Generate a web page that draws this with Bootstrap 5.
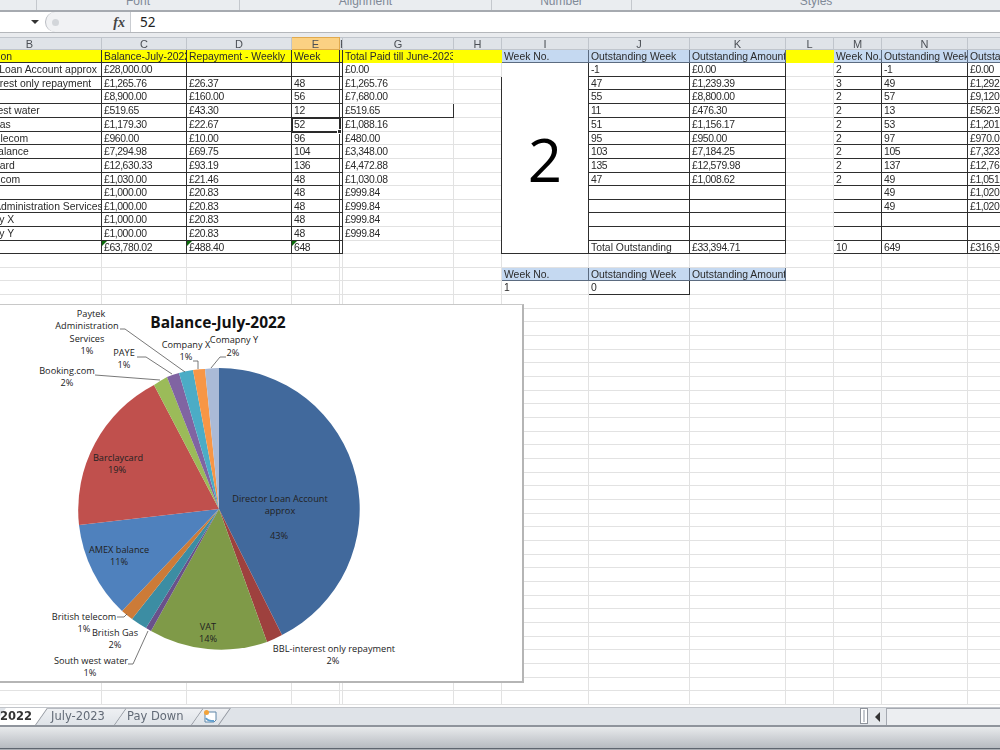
<!DOCTYPE html>
<html lang="en">
<head>
  <meta charset="UTF-8" />
  <title>Balance-July-2022</title>
  <link href="https://cdn.jsdelivr.net/npm/bootstrap@5.3.0/dist/css/bootstrap.min.css" rel="stylesheet">
  <style>
    html, body { height: 750px; overflow: hidden; margin: 0; background: #fff; }
    .xl-app { width: 1000px; height: 750px; font-family: "Liberation Sans", Arial, sans-serif; filter: blur(.3px); }
    .xl-ribbon { height: 12px; background: #eaedf0; border-bottom: 2px solid #a6aab0; overflow: hidden; }
    .xl-group { height: 10px; border-right: 1px solid #c4c8cd; color: #7f8997; font-size: 12px; line-height: 10px; text-align: center; position: relative; }
    .xl-group span { position: relative; top: -4px; }
    .xl-formula { height: 21px; background: #fff; border-bottom: 1px solid #b4b7bb; }
    .xl-name { width: 45px; }
    .xl-arrow { width: 0; height: 0; border-left: 4px solid transparent; border-right: 4px solid transparent; border-top: 4px solid #333; margin-left: 31px; }
    .xl-capsule { width: 86px; background: #f1f2f4; border: 1px solid #c9ccd1; border-left-color: #b9bcc2; border-top: 0; border-bottom: 0; border-radius: 11px 0 0 11px; padding: 0 5px 0 6px; }
    .xl-fx { font-family: "Liberation Serif", serif; font-style: italic; font-weight: bold; font-size: 14px; color: #444; }
    .xl-dot { width: 7px; height: 7px; border-radius: 50%; background: #d3d6da; }
    .xl-value { font-family: "Noto Sans", sans-serif; font-size: 13.5px; padding-left: 9px; color: #222; }
    .xl-gap { height: 4px; background: #e9ebee; }
    .xl-sheet { height: 670px; position: relative; overflow: hidden; }

    .sheet-grid.table { width: 1051px; margin: 0 0 0 -43px; table-layout: fixed; border-collapse: collapse; font-size: 10.4px; color: #2b2b2b; }
    .sheet-grid.table > :not(caption) > * > * { padding: 0 0 0 2px; height: auto; line-height: 11px; border: 1px solid #e2e2e2; box-shadow: none; background: transparent; white-space: nowrap; overflow: hidden; color: inherit; vertical-align: middle; letter-spacing: -.4px; }
    .sheet-grid.table > tbody > tr > td:first-child, .sheet-grid.table > tbody > tr > .ye, .sheet-grid.table > tbody > tr > .bl, .sheet-grid.table > tbody > tr > .txt { letter-spacing: 0; }
    .sheet-grid tr { height: 14px; }
    .sheet-grid tr.r13 { height: 13px; }
    .sheet-grid.table > thead > tr { height: 12px; }
    .sheet-grid.table > thead > tr > th { background: #dfe3e8; border-color: #c0c5cc; color: #4b4f55; font-weight: normal; font-size: 11px; line-height: 10px; letter-spacing: 0; text-align: center; padding: 0; }
    .sheet-grid.table > thead > tr > th.col-on { background: #fbd183; border-color: #e0a94e; }
    .sheet-grid.table > tbody > tr > .dk { border-color: #2e2e2e; }
    .sheet-grid.table > tbody > tr > .ye { background: #ffff00; border-color: #ffff00; }
    .sheet-grid.table > tbody > tr > .ye.dk { border-color: #2e2e2e; }
    .sheet-grid.table > tbody > tr > .bl { background: #c5d9f1; border-color: #5b6b80; }
    .sheet-grid.table > tbody > tr > .big { font-family: "Open Sans", sans-serif; font-size: 60px; font-weight: 500; line-height: 60px; text-align: center; color: #000; padding: 2px 0 0 0; letter-spacing: 0; }
    .sheet-grid.table > tbody > tr > .flagged { position: relative; overflow: visible; }
    .flagged::before { content: ""; position: absolute; left: 0; top: 0; border-top: 5px solid #0b6b0b; border-right: 5px solid transparent; }
    .sheet-grid.table > tbody > tr > .cur { position: relative; overflow: visible; outline: 2px solid #2a2a2a; outline-offset: -1px; }
    .cur::after { content: ""; position: absolute; right: -3px; bottom: -3px; width: 5px; height: 5px; background: #2a2a2a; border: 1px solid #fff; }

    .xl-chart { position: absolute; left: -4px; top: 267px; width: 528px; height: 379px; background: #fff; border: 1px solid #b5b5b5; border-width: 0 2px 2px 0; border-top: 1px solid #c8c8c8; }
    .xl-chart svg { display: block; font-family: "Open Sans", sans-serif; font-size: 9.2px; fill: #222; }
    .xl-chart .ttl { font-size: 15.5px; font-weight: 700; fill: #111; }
    .xl-chart polyline { fill: none; stroke: #555; stroke-width: .8; }

    .xl-tabs { height: 20px; background: #dfe3e8; border-top: 1px solid #c2c5ca; border-bottom: 2px solid #8f949c; overflow: hidden; }
    .xl-tab { position: relative; height: 17px; font-family: "DejaVu Sans", sans-serif; font-size: 11.5px; line-height: 17px; color: #626a76; white-space: nowrap; }
    .xl-tab::before { content: ""; position: absolute; inset: 0; background: linear-gradient(#eef0f3, #dfe3e8); border-right: 1px solid #8f949c; border-top: 1px solid #b6bac1; transform: skewX(-35deg); }
    .xl-tab > * { position: relative; }
    .tab-on { width: 42px; text-align: right; padding-right: 13px; font-weight: bold; color: #333; z-index: 2; }
    .tab-on::before { background: #fff; border-top: 0; }
    .tab-b { width: 79px; padding-left: 9px; }
    .tab-c { width: 77px; padding-left: 6px; }
    .tab-d { width: 27px; padding-left: 5px; }
    .xl-split { width: 8px; height: 16px; background: #fff; border: 1px solid #8f949c; }
    .xl-split::after { content: ""; display: block; width: 2px; height: 12px; margin: 1px 0 0 2px; background: #c5c9cf; }
    .xl-left { width: 18px; height: 17px; background: #e4e7eb; display: flex; align-items: center; justify-content: center; }
    .xl-left i { width: 0; height: 0; border-top: 5px solid transparent; border-bottom: 5px solid transparent; border-right: 5px solid #333; }
    .xl-track { width: 114px; height: 17px; background: #eceef1; border-left: 1px solid #a5a9b1; border-top: 1px solid #a5a9b1; }
    .xl-status { height: 23px; background: linear-gradient(#e8eaec, #b7bbc1 21px, #5f6670 21px, #5f6670 22px, #a9adb3 22px); }
  </style>
</head>
<body>
<div class="xl-app d-flex flex-column">
  <div class="xl-ribbon d-flex">
    <div class="xl-group" style="width:37px"></div>
    <div class="xl-group" style="width:203px"><span>Font</span></div>
    <div class="xl-group" style="width:252px"><span>Alignment</span></div>
    <div class="xl-group" style="width:140px"><span>Number</span></div>
    <div class="xl-group flex-grow-1 border-0"><span>Styles</span></div>
  </div>
  <div class="xl-formula d-flex align-items-stretch">
    <div class="xl-name d-flex align-items-center"><div class="xl-arrow"></div></div>
    <div class="xl-capsule d-flex align-items-center justify-content-between"><div class="xl-dot"></div><div class="xl-fx">fx</div></div>
    <div class="xl-value d-flex align-items-center">52</div>
  </div>
  <div class="xl-gap"></div>

  <div class="xl-sheet">
    <table class="table sheet-grid" id="grid">
      <colgroup>
        <col style="width:144px"><col style="width:85px"><col style="width:105px"><col style="width:48px"><col style="width:3px"><col style="width:111px"><col style="width:48px"><col style="width:87px"><col style="width:101px"><col style="width:96px"><col style="width:48px"><col style="width:48px"><col style="width:86px"><col style="width:41px">
      </colgroup>
      <thead>
        <tr><th>B</th><th>C</th><th>D</th><th class="col-on">E</th><th>F</th><th>G</th><th>H</th><th>I</th><th>J</th><th>K</th><th>L</th><th>M</th><th>N</th><th></th></tr>
      </thead>
      <tbody>
        <tr class="r13"><td class="ye dk">Description</td><td class="ye dk">Balance-July-2022</td><td class="ye dk">Repayment - Weekly</td><td class="ye dk">Week</td><td class="ye dk"></td><td class="ye">Total Paid till June-2023</td><td class="ye"></td><td class="bl">Week No.</td><td class="bl">Outstanding Week</td><td class="bl">Outstanding Amount</td><td class="ye"></td><td class="bl">Week No.</td><td class="bl">Outstanding Week</td><td class="bl">Outstanding Amount</td></tr>
        <tr><td class="dk">Director Loan Account approx</td><td class="dk">£28,000.00</td><td class="dk"></td><td class="dk"></td><td class="dk"></td><td>£0.00</td><td></td><td class="dk big" rowspan="14">2</td><td class="dk">-1</td><td class="dk">£0.00</td><td></td><td class="dk">2</td><td class="dk">-1</td><td class="dk">£0.00</td></tr>
        <tr class="r13"><td class="dk">BBL-interest only repayment</td><td class="dk">£1,265.76</td><td class="dk">£26.37</td><td class="dk">48</td><td class="dk"></td><td>£1,265.76</td><td></td><td class="dk">47</td><td class="dk">£1,239.39</td><td></td><td class="dk">3</td><td class="dk">49</td><td class="dk">£1,292.13</td></tr>
        <tr><td class="dk">VAT</td><td class="dk">£8,900.00</td><td class="dk">£160.00</td><td class="dk">56</td><td class="dk"></td><td>£7,680.00</td><td></td><td class="dk">55</td><td class="dk">£8,800.00</td><td></td><td class="dk">2</td><td class="dk">57</td><td class="dk">£9,120.00</td></tr>
        <tr><td class="dk">South west water</td><td class="dk">£519.65</td><td class="dk">£43.30</td><td class="dk">12</td><td class="dk"></td><td class="dk">£519.65</td><td></td><td class="dk">11</td><td class="dk">£476.30</td><td></td><td class="dk">2</td><td class="dk">13</td><td class="dk">£562.90</td></tr>
        <tr><td class="dk">British Gas</td><td class="dk">£1,179.30</td><td class="dk">£22.67</td><td class="cur">52</td><td class="dk"></td><td>£1,088.16</td><td></td><td class="dk">51</td><td class="dk">£1,156.17</td><td></td><td class="dk">2</td><td class="dk">53</td><td class="dk">£1,201.50</td></tr>
        <tr class="r13"><td class="dk">British telecom</td><td class="dk">£960.00</td><td class="dk">£10.00</td><td class="dk">96</td><td class="dk"></td><td>£480.00</td><td></td><td class="dk">95</td><td class="dk">£950.00</td><td></td><td class="dk">2</td><td class="dk">97</td><td class="dk">£970.00</td></tr>
        <tr><td class="dk">AMEX balance</td><td class="dk">£7,294.98</td><td class="dk">£69.75</td><td class="dk">104</td><td class="dk"></td><td>£3,348.00</td><td></td><td class="dk">103</td><td class="dk">£7,184.25</td><td></td><td class="dk">2</td><td class="dk">105</td><td class="dk">£7,323.75</td></tr>
        <tr><td class="dk">Barclaycard</td><td class="dk">£12,630.33</td><td class="dk">£93.19</td><td class="dk">136</td><td class="dk"></td><td>£4,472.88</td><td></td><td class="dk">135</td><td class="dk">£12,579.98</td><td></td><td class="dk">2</td><td class="dk">137</td><td class="dk">£12,766.36</td></tr>
        <tr class="r13"><td class="dk">Booking.com</td><td class="dk">£1,030.00</td><td class="dk">£21.46</td><td class="dk">48</td><td class="dk"></td><td>£1,030.08</td><td></td><td class="dk">47</td><td class="dk">£1,008.62</td><td></td><td class="dk">2</td><td class="dk">49</td><td class="dk">£1,051.54</td></tr>
        <tr><td class="dk">PAYE</td><td class="dk">£1,000.00</td><td class="dk">£20.83</td><td class="dk">48</td><td class="dk"></td><td>£999.84</td><td></td><td class="dk"></td><td class="dk"></td><td></td><td class="dk"></td><td class="dk">49</td><td class="dk">£1,020.67</td></tr>
        <tr class="r13"><td class="dk">Paytek Administration Services</td><td class="dk">£1,000.00</td><td class="dk">£20.83</td><td class="dk">48</td><td class="dk"></td><td>£999.84</td><td></td><td class="dk"></td><td class="dk"></td><td></td><td class="dk"></td><td class="dk">49</td><td class="dk">£1,020.67</td></tr>
        <tr><td class="dk">Company X</td><td class="dk">£1,000.00</td><td class="dk">£20.83</td><td class="dk">48</td><td class="dk"></td><td>£999.84</td><td></td><td class="dk"></td><td class="dk"></td><td></td><td class="dk"></td><td class="dk"></td><td class="dk"></td></tr>
        <tr><td class="dk">Company Y</td><td class="dk">£1,000.00</td><td class="dk">£20.83</td><td class="dk">48</td><td class="dk"></td><td>£999.84</td><td></td><td class="dk"></td><td class="dk"></td><td></td><td class="dk"></td><td class="dk"></td><td class="dk"></td></tr>
        <tr class="r13"><td class="dk"></td><td class="dk flagged">£63,780.02</td><td class="dk flagged">£488.40</td><td class="dk flagged">648</td><td class="dk"></td><td></td><td></td><td class="dk txt">Total Outstanding</td><td class="dk">£33,394.71</td><td></td><td class="dk">10</td><td class="dk">649</td><td class="dk">£316,960</td></tr>
        <tr><td></td><td></td><td></td><td></td><td></td><td></td><td></td><td></td><td></td><td></td><td></td><td></td><td></td><td></td></tr>
        <tr class="r13"><td></td><td></td><td></td><td></td><td></td><td></td><td></td><td class="bl">Week No.</td><td class="bl">Outstanding Week</td><td class="bl">Outstanding Amount</td><td></td><td></td><td></td><td></td></tr>
        <tr><td></td><td></td><td></td><td></td><td></td><td></td><td></td><td>1</td><td class="dk">0</td><td></td><td></td><td></td><td></td><td></td></tr>
      </tbody>
    </table>

    <div class="xl-chart">
      <svg width="526" height="377" viewBox="-4 304 526 377">
        <text class="ttl" x="218" y="327" text-anchor="middle">Balance-July-2022</text>
        <path fill="#41699c" d="M219 508V367A141 141 0 0 1 282 634Z"/>
        <path fill="#9e413e" d="M219 508L282 634A141 141 0 0 1 267 641Z"/>
        <path fill="#7f9a48" d="M219 508L267 641A141 141 0 0 1 151 630Z"/>
        <path fill="#69518a" d="M219 508L151 630A141 141 0 0 1 146 627Z"/>
        <path fill="#3c8da3" d="M219 508L146 627A141 141 0 0 1 132 618Z"/>
        <path fill="#cc7b38" d="M219 508L132 618A141 141 0 0 1 122 610Z"/>
        <path fill="#4f81bd" d="M219 508L122 610A141 141 0 0 1 79 524Z"/>
        <path fill="#c0504d" d="M219 508L79 524A141 141 0 0 1 154 384Z"/>
        <path fill="#9bbb59" d="M219 508L154 384A141 141 0 0 1 167 376Z"/>
        <path fill="#8064a2" d="M219 508L167 376A141 141 0 0 1 179 372Z"/>
        <path fill="#4bacc6" d="M219 508L179 372A141 141 0 0 1 193 369Z"/>
        <path fill="#f79646" d="M219 508L193 369A141 141 0 0 1 205 368Z"/>
        <path fill="#aabad7" d="M219 508L205 368A141 141 0 0 1 219 367Z"/>

        <polyline points="95,374 160,379"/>
        <polyline points="137,356 146,356 172,373"/>
        <polyline points="120,328 125,328 185,371"/>
        <polyline points="193,360 198,360 198,368"/>
        <polyline points="226,356 220,356 211,367"/>
        <polyline points="117,616 124,616 127,613"/>
        <polyline points="128,663 133,663 148,630"/>

        <text x="91" y="316" text-anchor="middle">Paytek</text>
        <text x="87" y="328" text-anchor="middle">Administration</text>
        <text x="87" y="341" text-anchor="middle">Services</text>
        <text x="87" y="353" text-anchor="middle">1%</text>
        <text x="124" y="355" text-anchor="middle">PAYE</text>
        <text x="124" y="367" text-anchor="middle">1%</text>
        <text x="67" y="373" text-anchor="middle">Booking.com</text>
        <text x="67" y="385" text-anchor="middle">2%</text>
        <text x="186" y="347" text-anchor="middle">Company X</text>
        <text x="186" y="359" text-anchor="middle">1%</text>
        <text x="234" y="342" text-anchor="middle">Comapny Y</text>
        <text x="233" y="355" text-anchor="middle">2%</text>
        <text x="118" y="460" text-anchor="middle">Barclaycard</text>
        <text x="117" y="472" text-anchor="middle">19%</text>
        <text x="119" y="552" text-anchor="middle">AMEX balance</text>
        <text x="119" y="564" text-anchor="middle">11%</text>
        <text x="280" y="501" text-anchor="middle">Director Loan Account</text>
        <text x="280" y="513" text-anchor="middle">approx</text>
        <text x="279" y="538" text-anchor="middle">43%</text>
        <text x="208" y="629" text-anchor="middle">VAT</text>
        <text x="208" y="641" text-anchor="middle">14%</text>
        <text x="334" y="651" text-anchor="middle">BBL-interest only repayment</text>
        <text x="333" y="663" text-anchor="middle">2%</text>
        <text x="84" y="619" text-anchor="middle">British telecom</text>
        <text x="84" y="631" text-anchor="middle">1%</text>
        <text x="115" y="635" text-anchor="middle">British Gas</text>
        <text x="115" y="647" text-anchor="middle">2%</text>
        <text x="91" y="663" text-anchor="middle">South west water</text>
        <text x="90" y="675" text-anchor="middle">1%</text>
      </svg>
    </div>
  </div>

  <div class="xl-tabs d-flex">
    <div class="xl-tab tab-on"><span>2022</span></div>
    <div class="xl-tab tab-b"><span>July-2023</span></div>
    <div class="xl-tab tab-c"><span>Pay Down</span></div>
    <div class="xl-tab tab-d">
      <svg width="15" height="15" viewBox="0 0 15 15"><path d="M2 3h11v8l-2 2H2z" fill="#fff" stroke="#5f86a8"/><path d="M3 9c1 3 5 3 8 3" fill="none" stroke="#5f9fd0" stroke-width="2"/><circle cx="3.5" cy="3.5" r="2.5" fill="#f2a33a"/></svg>
    </div>
    <div class="ms-auto d-flex">
      <div class="xl-split"></div>
      <div class="xl-left"><i></i></div>
      <div class="xl-track"></div>
    </div>
  </div>
  <div class="xl-status"></div>
</div>

<script>
  // blank rows below the data, down to the tab strip
  const body = document.querySelector("#grid tbody");
  for (let i = 0; i < 30; i++) {
    const tr = document.createElement("tr");
    if (i % 3 === 1) tr.className = "r13";
    for (let c = 0; c < 14; c++) tr.appendChild(document.createElement("td"));
    body.appendChild(tr);
  }
</script>
<script src="https://cdn.jsdelivr.net/npm/bootstrap@5.3.0/dist/js/bootstrap.bundle.min.js"></script>
</body>
</html>
